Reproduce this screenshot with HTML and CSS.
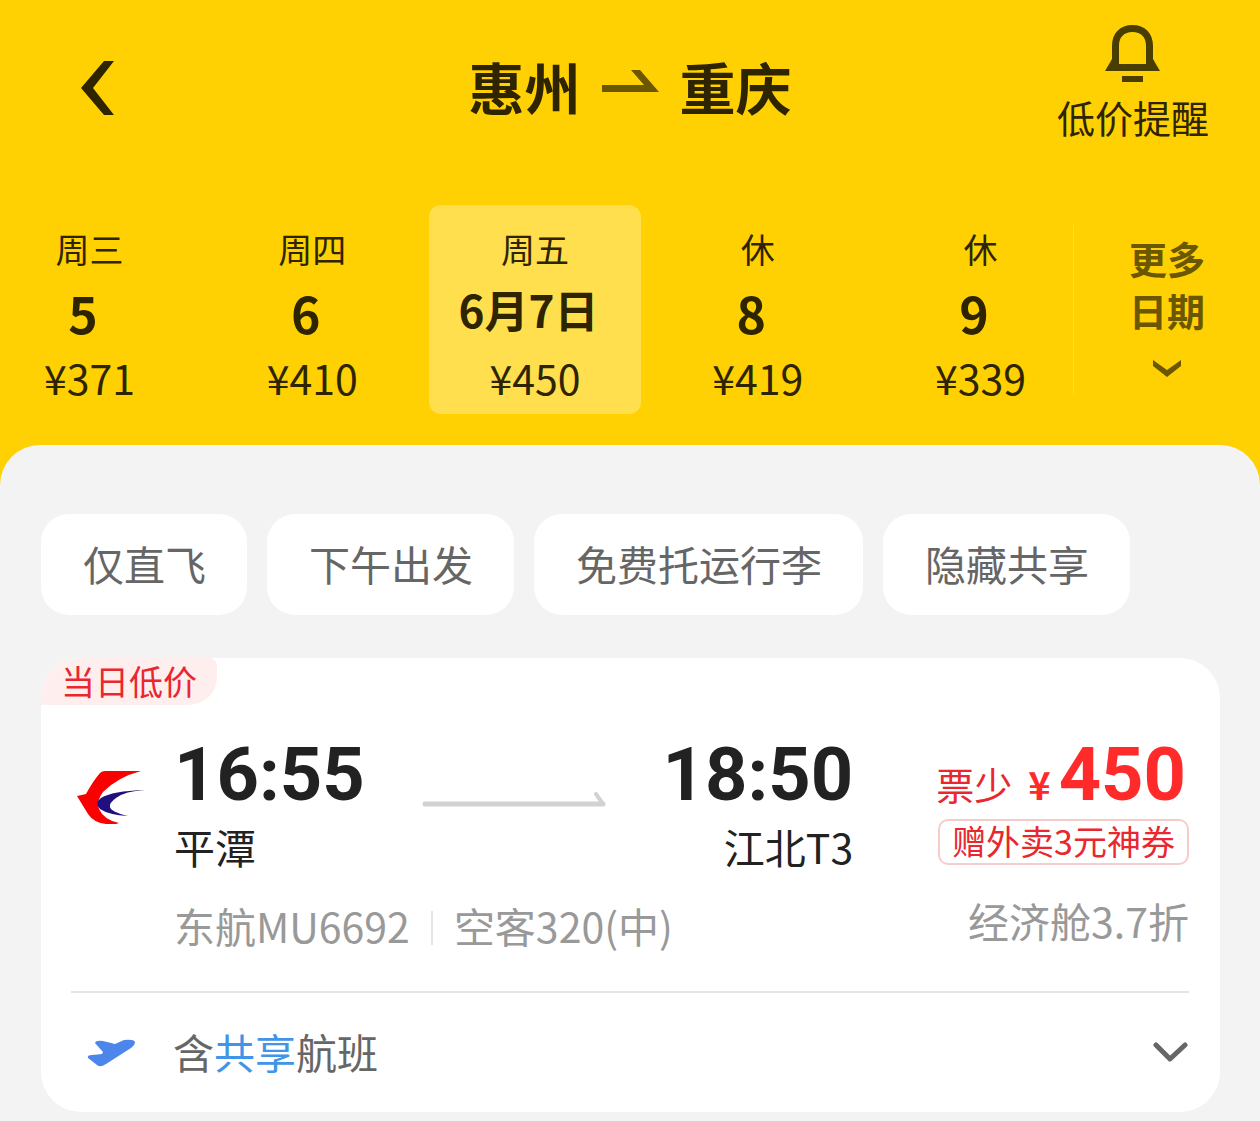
FILE: index.html
```html
<!DOCTYPE html>
<html lang="zh-CN">
<head>
<meta charset="utf-8">
<meta name="viewport" content="width=device-width, initial-scale=1">
<title>惠州 - 重庆 机票</title>
<link rel="stylesheet" href="styles.css">
</head>
<body>
<header class="top">
  <div class="nav">
    <button class="back" type="button" aria-label="返回">
      <svg width="34" height="54" viewBox="0 0 34 54" fill="#2e2400"><path d="M23 0h10L12 27l21 27H23L0 27z"/></svg>
    </button>
    <h1 class="route">
      <span>惠州</span>
      <svg width="57" height="22" viewBox="0 0 57 22" fill="#6b5700"><path d="M0 15h42L29 0h9l19 22H0z"/></svg>
      <span>重庆</span>
    </h1>
    <button class="alert" type="button">
      <svg width="57" height="58" viewBox="0 0 57 58" fill="#4a3d00"><path fill-rule="evenodd" d="M1 46l7-12V21C8 8 16 0 28.500 0S49 8 49 21v13l7 12zM15 39h27V21C42 12 37 7 28.500 7S15 12 15 21z"/><path d="M18 51h21v6H18z"/></svg>
      <span>低价提醒</span>
    </button>
  </div>
  <div class="calendar">
    <div class="dates">
      <button class="date" type="button"><span class="week">周三</span><span class="day">5</span><span class="fare">¥371</span></button>
      <button class="date" type="button"><span class="week">周四</span><span class="day">6</span><span class="fare">¥410</span></button>
      <button class="date selected" type="button" aria-current="date"><span class="week">周五</span><span class="day">6月7日</span><span class="fare">¥450</span></button>
      <button class="date" type="button"><span class="week">休</span><span class="day">8</span><span class="fare">¥419</span></button>
      <button class="date" type="button"><span class="week">休</span><span class="day">9</span><span class="fare">¥339</span></button>
    </div>
    <button class="more" type="button">
      <span>更多</span>
      <span>日期</span>
      <svg width="28" height="17" viewBox="0 0 28 17" fill="#6b5700"><path d="M0 0l14 10L28 0v6L14 17 0 6z"/></svg>
    </button>
  </div>
</header>
<main class="sheet">
  <div class="chips">
    <button class="chip" type="button">仅直飞</button>
    <button class="chip" type="button">下午出发</button>
    <button class="chip" type="button">免费托运行李</button>
    <button class="chip" type="button">隐藏共享</button>
  </div>
  <article class="card">
    <span class="badge">当日低价</span>
    <div class="flight">
      <svg class="logo" width="70" height="58" viewBox="0 0 70 58" role="img" aria-label="东方航空"><path d="M29 3h36Q42 9 27 24q-7 9-4 17 5 11 20 14l-3 1H30Q18 55 12 46L1 28l9-2Q17 13 24 5q2-2 5-2z" fill="#fb0000"/><path d="M69 22Q36 23 25 30q-7 5-1 11 9 6 28 7-17-4-18-9-1-4 6-9 9-7 29-8z" fill="#20107f"/></svg>
      <div class="trip">
        <div class="legs">
          <div>
            <time class="time">16:55</time>
            <div class="place">平潭</div>
          </div>
          <svg class="arrow" width="184" height="16" viewBox="0 0 184 16" fill="none" stroke="#d2d2d2" stroke-linecap="round" stroke-linejoin="round"><path stroke-width="5" d="M3 13h178"/><path stroke-width="4" d="M174 3l7 10"/></svg>
          <div class="arrive">
            <time class="time">18:50</time>
            <div class="place">江北T3</div>
          </div>
        </div>
        <div class="meta"><span>东航MU6692</span><span class="plane">空客320(中)</span></div>
      </div>
      <div class="offer">
        <div class="price"><span class="few">票少</span><span class="yen">¥</span><strong class="amount">450</strong></div>
        <span class="coupon">赠外卖3元神券</span>
        <span class="cabin">经济舱3.7折</span>
      </div>
    </div>
    <button class="shared" type="button" aria-expanded="false">
      <svg class="jet" width="50" height="28" viewBox="0 0 50 28"><path d="M8 4q1-3 8-2l12 3 9-4q10-1 11 2 0 3-4 6L19 25q-6 4-9 1L1 19q-1-3 4-3l10-1 1-2z" fill="#4c86ea"/></svg>
      <span class="shared-text">含<em>共享</em>航班</span>
      <svg width="35" height="21" viewBox="0 0 35 21" fill="none" stroke="#666" stroke-width="5" stroke-linecap="round" stroke-linejoin="round"><path d="M3 3l14 14L32 3"/></svg>
    </button>
  </article>
</main>
</body>
</html>
```
FILE: styles.css
```css
* {
  box-sizing: border-box;
}

body {
  display: flex;
  flex-direction: column;
  min-height: 100vh;
  margin: 0;
  background: #ffd102;
  color: #222;
  font-family: "Noto Sans CJK SC", sans-serif;
  overflow-x: hidden;
}

button {
  margin: 0;
  padding: 0;
  border: 0;
  background: none;
  color: inherit;
  font: inherit;
  cursor: pointer;
}

svg {
  display: block;
  flex: none;
}

.top {
  padding-bottom: 31px;
  color: #2e2400;
}

/* Title bar */
.nav {
  display: grid;
  grid-template-columns: 1fr auto 1fr;
  align-items: center;
  height: 176px;
  margin-bottom: 29px;
  padding: 0 51px;
}

.back {
  justify-self: start;
  margin-left: 30px;
}

.route {
  display: flex;
  align-items: center;
  gap: 21px;
  margin: 0 0 4px;
  font-size: 56px;
  line-height: 64px;
  font-weight: 700;
}

.route svg {
  margin-bottom: 10px;
}

.alert {
  display: flex;
  flex-direction: column;
  align-items: center;
  align-self: start;
  justify-self: end;
  gap: 10px;
  margin-top: 25px;
  font-size: 38px;
  line-height: 48px;
}

/* Date strip */
.calendar {
  display: flex;
}

.dates {
  display: flex;
  flex: 1;
  gap: 10px;
  margin: 0 -14px 0 -17px;
}

.date {
  display: flex;
  flex: 1 1 0;
  flex-direction: column;
  align-items: center;
  padding: 24px 0 12px;
  border-radius: 12px;
}

.selected {
  background: #ffdf4e;
}

.week {
  font-size: 34px;
  line-height: 40px;
}

.day {
  margin: 15px 0 12px;
  padding-right: 13px;
  font-size: 50px;
  line-height: 56px;
  font-weight: 700;
}

.selected .day {
  margin-bottom: 18px;
  font-size: 44px;
  line-height: 50px;
}

.fare {
  font-size: 41px;
  line-height: 50px;
}

.more {
  display: flex;
  flex-direction: column;
  align-items: center;
  width: 187px;
  margin: 20px 0 19px;
  padding-top: 7px;
  border-left: 1px solid #ffd935;
  color: #6b5700;
  font-size: 38px;
  line-height: 52px;
  font-weight: 700;
}

.more svg {
  margin-top: 24px;
}

/* Results */
.sheet {
  flex: 1;
  padding: 69px 40px 9px 41px;
  border-radius: 40px 40px 0 0;
  background: #f3f3f3;
}

.chips {
  display: flex;
  gap: 20px;
  margin-bottom: 43px;
}

.chip {
  padding: 19px 41px 22px 42px;
  border-radius: 28px;
  background: #fff;
  color: #666;
  font-size: 41px;
  line-height: 60px;
}

.card {
  border-radius: 40px;
  background: #fff;
}

.badge {
  display: block;
  width: fit-content;
  padding: 0 20px 2px;
  border-radius: 40px 8px 28px 0;
  background: #ffeeee;
  color: #e8282e;
  font-size: 34px;
  line-height: 45px;
}

.flight {
  display: grid;
  grid-template-columns: 103px 1fr auto;
  margin: 0 31px 0 30px;
  padding: 34px 0 41px;
  border-bottom: 2px solid #e5e5e5;
}

.logo {
  margin: 29px 0 0 5px;
}

.trip {
  margin-right: 83px;
}

.legs {
  display: flex;
  justify-content: space-between;
}

.time {
  display: block;
  font-family: Roboto, sans-serif;
  font-size: 74px;
  line-height: 72px;
  font-weight: 700;
}

.place {
  margin-top: 10px;
  font-size: 41px;
  line-height: 50px;
}

.arrow {
  margin-top: 52px;
}

.arrive {
  text-align: right;
}

.meta {
  display: flex;
  align-items: center;
  margin-top: 29px;
  color: #999;
  font-size: 41px;
  line-height: 50px;
}

.plane::before {
  content: "";
  display: inline-block;
  width: 2px;
  height: 34px;
  margin: 0 21px;
  background: #e5e5e5;
  vertical-align: -2px;
}

.offer {
  display: flex;
  flex-direction: column;
  align-items: flex-end;
}

.price {
  display: flex;
  align-items: baseline;
  padding-right: 3px;
  color: #ff2a2a;
}

.few {
  margin-right: 16px;
  color: #e8282e;
  font-size: 38px;
  line-height: 38px;
}

.yen {
  margin-right: 8px;
  font-size: 38px;
  line-height: 38px;
  font-weight: 700;
}

.amount {
  font-family: Roboto, sans-serif;
  font-size: 74px;
  line-height: 72px;
  font-weight: 700;
}

.coupon {
  margin-top: 8px;
  padding: 0 12px 2px;
  border: 2px solid #f9cccc;
  border-radius: 10px;
  color: #e8282e;
  font-size: 34px;
  line-height: 40px;
}

.cabin {
  margin-top: 30px;
  color: #999;
  font-size: 41px;
  line-height: 50px;
}

.shared {
  display: flex;
  align-items: center;
  width: 100%;
  height: 119px;
  padding: 0 32px 0 46px;
  color: #666;
  font-size: 41px;
  line-height: 50px;
}

.jet {
  margin-right: 36px;
}

.shared-text {
  flex: 1;
  padding-bottom: 4px;
  text-align: left;
}

.shared-text em {
  color: #4095e8;
  font-style: normal;
}
```
